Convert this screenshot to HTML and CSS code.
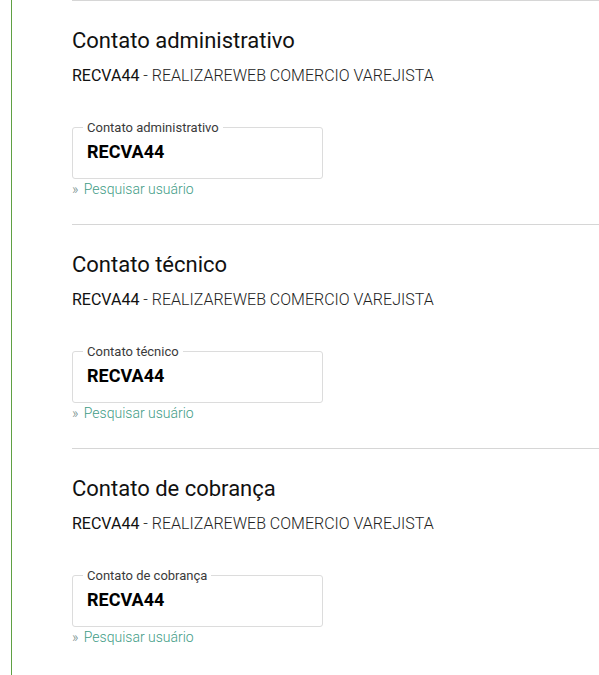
FILE: index.html
```html
<!DOCTYPE html>
<html lang="pt">
<head>
<meta charset="utf-8">
<title>Contatos</title>
<link rel="stylesheet" href="styles.css">
</head>
<body>
<div class="page">
  <div class="content">
    <section class="section">
      <h2 class="title">Contato administrativo</h2>
      <p class="owner"><span class="code">RECVA44</span> - REALIZAREWEB COMERCIO VAREJISTA</p>
      <fieldset class="field">
        <legend class="legend">Contato administrativo</legend>
        <div class="value">RECVA44</div>
      </fieldset>
      <a class="link" href="#"><span class="raquo">»</span> Pesquisar usuário</a>
    </section>
    <section class="section">
      <h2 class="title">Contato técnico</h2>
      <p class="owner"><span class="code">RECVA44</span> - REALIZAREWEB COMERCIO VAREJISTA</p>
      <fieldset class="field">
        <legend class="legend">Contato técnico</legend>
        <div class="value">RECVA44</div>
      </fieldset>
      <a class="link" href="#"><span class="raquo">»</span> Pesquisar usuário</a>
    </section>
    <section class="section">
      <h2 class="title">Contato de cobrança</h2>
      <p class="owner"><span class="code">RECVA44</span> - REALIZAREWEB COMERCIO VAREJISTA</p>
      <fieldset class="field">
        <legend class="legend">Contato de cobrança</legend>
        <div class="value">RECVA44</div>
      </fieldset>
      <a class="link" href="#"><span class="raquo">»</span> Pesquisar usuário</a>
    </section>
  </div>
</div>
</body>
</html>
```
FILE: styles.css
```css
html, body {
  margin: 0;
  padding: 0;
  background: #ffffff;
}
body {
  font-family: Roboto, "Liberation Sans", sans-serif;
  color: #111;
  height: 675px;
  overflow: hidden;
}
.page {
  margin-left: 11px;
  border-left: 1px solid #5fa043;
  min-height: 675px;
  padding-left: 60px;
}
.content {
  display: flex;
  flex-direction: column;
}
.section {
  border-top: 1px solid #d6d6d6;
  height: 223px;
  display: flex;
  flex-direction: column;
  align-items: flex-start;
}
.title {
  margin: 27px 0 0 0;
  font-size: 22px;
  font-weight: 400;
  line-height: 26px;
  color: #111;
}
.owner {
  margin: 12px 0 0 0;
  font-size: 16px;
  line-height: 20px;
  font-weight: 300;
  color: #222;
}
.code {
  font-weight: 400;
  color: #111;
}
.field {
  margin: 34px 0 0 0;
  width: 251px;
  box-sizing: border-box;
  height: 59px;
  border: 1px solid #dcdcdc;
  border-radius: 3px;
  padding: 0 14px 0 14px;
}
.legend {
  font-size: 13px;
  line-height: 15px;
  color: #3a3a3a;
  padding: 0 4px;
  margin-left: -4px;
}
.value {
  font-size: 18px;
  font-weight: 700;
  line-height: 22px;
  color: #000;
  margin-top: 6px;
}
.link {
  margin-top: 2px;
  font-size: 14px;
  line-height: 16px;
  font-weight: 300;
  color: #3f9c86;
  text-decoration: none;
}
.raquo {
  color: #6f8a88;
  margin-right: 2px;
}
```
